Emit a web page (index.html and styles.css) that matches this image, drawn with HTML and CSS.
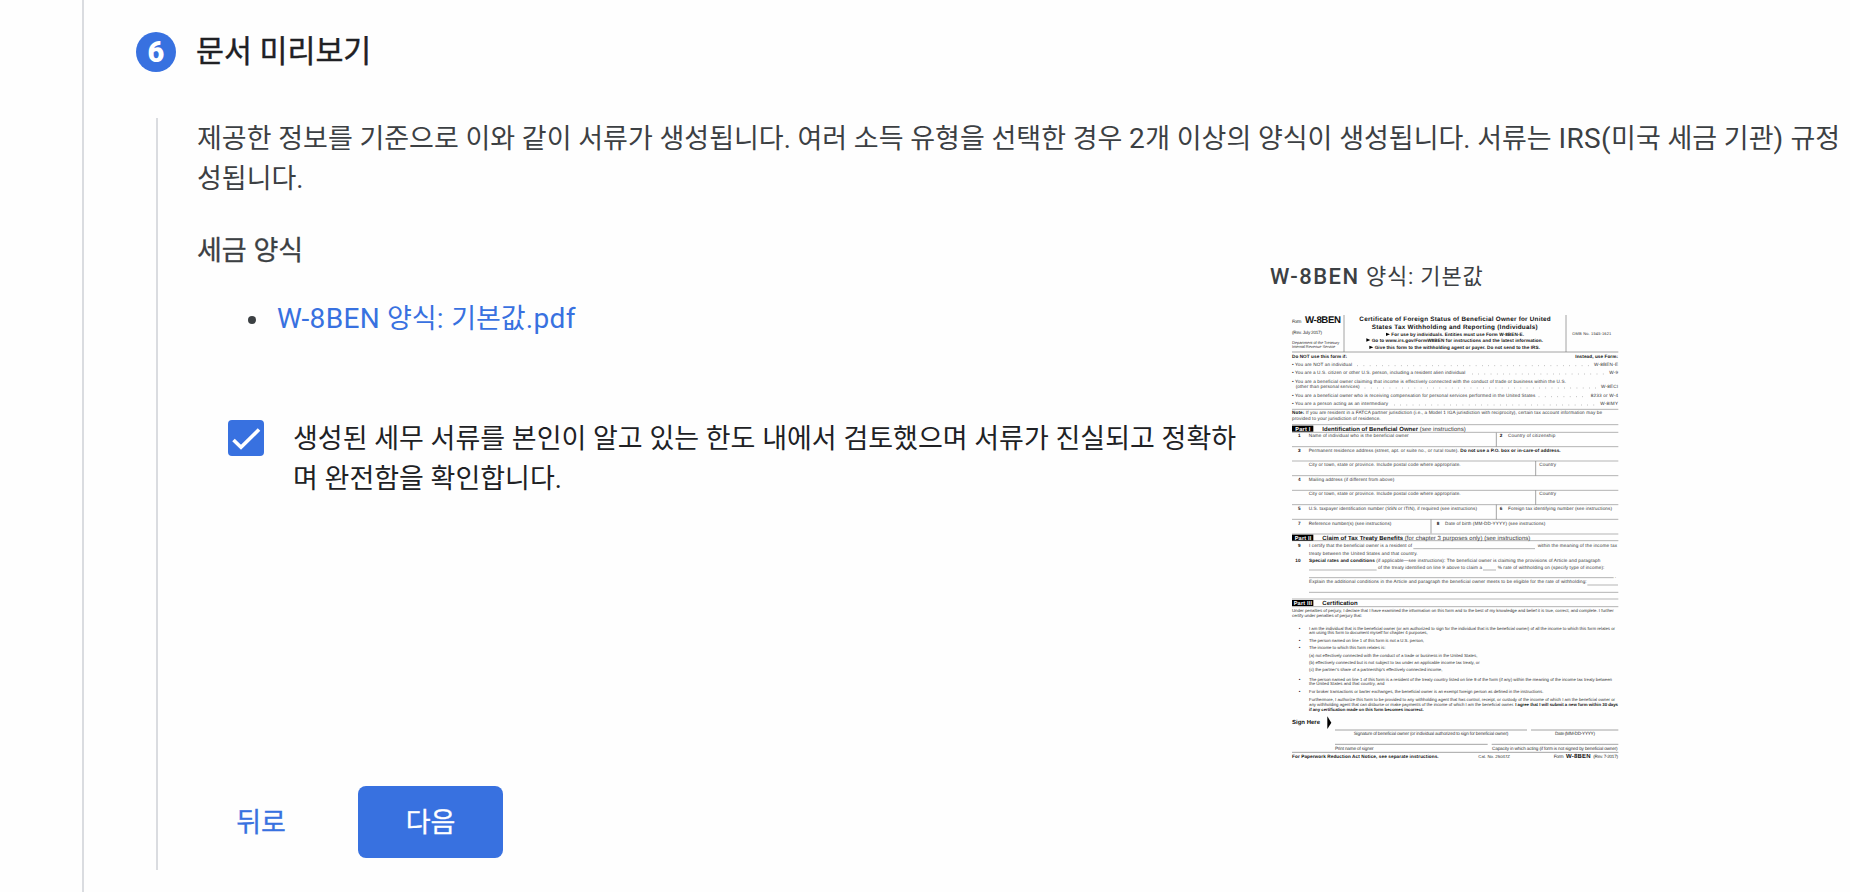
FILE: index.html
```html
<!DOCTYPE html>
<html lang="ko">
<head>
    <meta charset="UTF-8">
    <meta name="viewport" content="width=device-width, initial-scale=1.0">
    <title>문서 미리보기</title>
    <link rel="stylesheet" href="styles.css">
</head>
<body>
<div class="stepper">
    <div class="step-header">
        <span class="step-number">6</span>
        <h1>문서 미리보기</h1>
    </div>
    <div class="step-body">
        <p class="intro">제공한 정보를 기준으로 이와 같이 서류가 생성됩니다. 여러 소득 유형을 선택한 경우 <span class="latin">2</span>개 이상의 양식이 생성됩니다. 서류는 <span class="latin">IRS(</span>미국 세금 기관<span class="latin">)</span> 규정<br>성됩니다.</p>
        <div class="columns">
            <div class="forms">
                <h2>세금 양식</h2>
                <ul>
                    <li><a href="#"><span class="latin">W-8BEN</span> 양식<span class="latin">: </span>기본값<span class="latin">.pdf</span></a></li>
                </ul>
                <label class="confirm">
                    <span class="checkbox">
                        <svg width="36" height="36" viewBox="0 0 36 36"><path d="M5.5 20 L13 27.3 L31 9.5" fill="none" stroke="#fff" stroke-width="3.6"/></svg>
                    </span>
                    <span class="confirm-text">생성된 세무 서류를 본인이 알고 있는 한도 내에서 검토했으며 서류가 진실되고 정확하<br>며 완전함을 확인합니다.</span>
                </label>
            </div>
            <div class="preview">
                <h3><span class="latin-bold">W-8BEN</span> 양식: 기본값</h3>
                <svg class="document" width="350" height="460" viewBox="0 0 1050 1380">
                    <!-- form header -->
                    <text x="36" y="54" textLength="28">Form</text>
                    <text class="b" x="75" y="53" font-size="29" textLength="108">W-8BEN</text>
                    <text x="36" y="88" textLength="90">(Rev. July 2017)</text>
                    <text x="36" y="118" font-size="12" textLength="142">Department of the Treasury</text>
                    <text x="36" y="130" font-size="12" textLength="130">Internal Revenue Service</text>
                    <text class="b" x="238" y="49" font-size="19" textLength="574">Certificate of Foreign Status of Beneficial Owner for United</text>
                    <text class="b" x="275" y="71" font-size="19" textLength="498">States Tax Withholding and Reporting (Individuals)</text>
                    <path class="arrow" d="M318 83l12 5-12 5zM259 100l12 5-12 5zM268 122l12 5-12 5z"/>
                    <text class="b" x="334" y="93" textLength="398">For use by individuals. Entities must use Form W-8BEN-E.</text>
                    <text class="b" x="275" y="111" textLength="514">Go to www.irs.gov/FormW8BEN for instructions and the latest information.</text>
                    <text class="b" x="284" y="133" textLength="496">Give this form to the withholding agent or payer. Do not send to the IRS.</text>
                    <text x="877" y="89" font-size="12" textLength="117">OMB No. 1545-1621</text>
                    <path class="rule" d="M192 30V141M858 30V141"/>
                    <path class="rule" d="M36 141H1015"/>

                    <!-- who should not use the form -->
                    <text class="b" x="36" y="158" textLength="165">Do NOT use this form if:</text>
                    <text class="b" x="886" y="159" textLength="128">Instead, use Form:</text>
                    <text x="36" y="183" textLength="180">• You are NOT an individual</text>
                    <text x="942" y="183" textLength="72">W-8BEN-E</text>
                    <text x="36" y="208" textLength="520">• You are a U.S. citizen or other U.S. person, including a resident alien individual</text>
                    <text x="988" y="208" textLength="26">W-9</text>
                    <text x="36" y="234" textLength="822">• You are a beneficial owner claiming that income is effectively connected with the conduct of trade or business within the U.S.</text>
                    <text x="47" y="250" textLength="192">(other than personal services)</text>
                    <text x="963" y="250" textLength="51">W-8ECI</text>
                    <text x="36" y="276" textLength="730">• You are a beneficial owner who is receiving compensation for personal services performed in the United States</text>
                    <text x="932" y="276" textLength="82">8233 or W-4</text>
                    <text x="36" y="301" textLength="288">• You are a person acting as an intermediary</text>
                    <text x="961" y="301" textLength="53">W-8IMY</text>
                    <path class="dots" d="M232 182H932M576 207H980M254 249H952M776 275H924M342 300H952"/>
                    <path class="light" d="M36 313H1015"/>
                    <text x="36" y="328" textLength="930"><tspan class="b">Note:</tspan> If you are resident in a FATCA partner jurisdiction (i.e., a Model 1 IGA jurisdiction with reciprocity), certain tax account information may be</text>
                    <text x="36" y="344" textLength="266">provided to your jurisdiction of residence.</text>

                    <!-- part I -->
                    <path class="light" d="M36 359H1015M36 382H1015"/>
                    <rect x="36" y="362" width="64" height="18"/>
                    <text class="b white" x="46" y="377" font-size="17" textLength="45">Part I</text>
                    <text x="127" y="377" font-size="18" textLength="430"><tspan class="b">Identification of Beneficial Owner</tspan> (see instructions)</text>
                    <text class="b" x="54" y="396">1</text>
                    <text x="86" y="396" textLength="300">Name of individual who is the beneficial owner</text>
                    <text class="b" x="659" y="396">2</text>
                    <text x="684" y="396" textLength="142">Country of citizenship</text>
                    <text class="b" x="54" y="440">3</text>
                    <text x="86" y="440" textLength="756">Permanent residence address (street, apt. or suite no., or rural route). <tspan class="b">Do not use a P.O. box or in-care-of address.</tspan></text>
                    <text x="86" y="484" textLength="456">City or town, state or province. Include postal code where appropriate.</text>
                    <text x="778" y="484" textLength="50">Country</text>
                    <text class="b" x="54" y="527">4</text>
                    <text x="86" y="527" textLength="257">Mailing address (if different from above)</text>
                    <text x="86" y="571" textLength="456">City or town, state or province. Include postal code where appropriate.</text>
                    <text x="778" y="571" textLength="50">Country</text>
                    <text class="b" x="54" y="615">5</text>
                    <text x="86" y="615" textLength="505">U.S. taxpayer identification number (SSN or ITIN), if required (see instructions)</text>
                    <text class="b" x="659" y="615">6</text>
                    <text x="684" y="615" textLength="312">Foreign tax identifying number (see instructions)</text>
                    <text class="b" x="54" y="661">7</text>
                    <text x="86" y="661" textLength="248">Reference number(s) (see instructions)</text>
                    <text class="b" x="470" y="661">8</text>
                    <text x="495" y="661" textLength="301">Date of birth (MM-DD-YYYY) (see instructions)</text>
                    <path class="light" d="M36 425H1015M36 468H1015M36 512H1015M36 556H1015M36 599H1015M36 643H1015"/>
                    <path class="rule" d="M649 383V425M767 468V512M767 556V599M649 599V643M453 643V686"/>

                    <!-- part II -->
                    <path class="light" d="M36 687H1015M36 707H1015"/>
                    <rect x="36" y="689" width="64" height="18"/>
                    <text class="b white" x="44" y="704" font-size="17" textLength="50">Part II</text>
                    <text x="127" y="704" font-size="18" textLength="624"><tspan class="b">Claim of Tax Treaty Benefits</tspan> (for chapter 3 purposes only) (see instructions)</text>
                    <text class="b" x="54" y="726">9</text>
                    <text x="87" y="726" textLength="309">I certify that the beneficial owner is a resident of</text>
                    <text x="773" y="726" textLength="238">within the meaning of the income tax</text>
                    <text x="87" y="749" textLength="326">treaty between the United States and that country.</text>
                    <text class="b" x="46" y="770">10</text>
                    <text x="87" y="770" textLength="874"><tspan class="b">Special rates and conditions</tspan> (if applicable—see instructions): The beneficial owner is claiming the provisions of Article and paragraph</text>
                    <text x="294" y="792" textLength="312">of the treaty identified on line 9 above to claim a</text>
                    <text x="653" y="792" textLength="320">% rate of withholding on (specify type of income):</text>
                    <text x="1004" y="818">.</text>
                    <text x="87" y="835" textLength="833">Explain the additional conditions in the Article and paragraph the beneficial owner meets to be eligible for the rate of withholding:</text>
                    <path class="light" d="M400 731H765M87 795H290M609 795H648M87 818H1001M922 840H1014M87 862H1015"/>

                    <!-- part III -->
                    <path class="light" d="M36 882H1015M36 905H1015"/>
                    <rect x="36" y="885" width="64" height="18"/>
                    <text class="b white" x="41" y="900" font-size="17" textLength="55">Part III</text>
                    <text class="b" x="127" y="900" font-size="18" textLength="106">Certification</text>
                    <text x="36" y="922" font-size="13" textLength="965">Under penalties of perjury, I declare that I have examined the information on this form and to the best of my knowledge and belief it is true, correct, and complete. I further</text>
                    <text x="36" y="936" font-size="13" textLength="210">certify under penalties of perjury that:</text>
                    <text x="56" y="974">•</text>
                    <text x="87" y="974" font-size="13" textLength="918">I am the individual that is the beneficial owner (or am authorized to sign for the individual that is the beneficial owner) of all the income to which this form relates or</text>
                    <text x="87" y="987" font-size="13" textLength="356">am using this form to document myself for chapter 4 purposes,</text>
                    <text x="56" y="1011">•</text>
                    <text x="87" y="1011" font-size="13" textLength="345">The person named on line 1 of this form is not a U.S. person,</text>
                    <text x="56" y="1032">•</text>
                    <text x="87" y="1032" font-size="13" textLength="229">The income to which this form relates is:</text>
                    <text x="87" y="1055" font-size="13" textLength="505">(a) not effectively connected with the conduct of a trade or business in the United States,</text>
                    <text x="87" y="1077" font-size="13" textLength="512">(b) effectively connected but is not subject to tax under an applicable income tax treaty, or</text>
                    <text x="87" y="1099" font-size="13" textLength="400">(c) the partner’s share of a partnership’s effectively connected income,</text>
                    <text x="56" y="1127">•</text>
                    <text x="87" y="1127" font-size="13" textLength="909">The person named on line 1 of this form is a resident of the treaty country listed on line 9 of the form (if any) within the meaning of the income tax treaty between</text>
                    <text x="87" y="1140" font-size="13" textLength="226">the United States and that country, and</text>
                    <text x="56" y="1164">•</text>
                    <text x="87" y="1164" font-size="13" textLength="703">For broker transactions or barter exchanges, the beneficial owner is an exempt foreign person as defined in the instructions.</text>
                    <text x="87" y="1188" font-size="13" textLength="918">Furthermore, I authorize this form to be provided to any withholding agent that has control, receipt, or custody of the income of which I am the beneficial owner or</text>
                    <text x="87" y="1203" font-size="13" textLength="927">any withholding agent that can disburse or make payments of the income of which I am the beneficial owner. <tspan class="b">I agree that I will submit a new form within 30 days</tspan></text>
                    <text class="b" x="87" y="1218" font-size="13" textLength="344">if any certification made on this form becomes incorrect.</text>

                    <!-- signature -->
                    <text class="b" x="36" y="1257" font-size="18" textLength="84">Sign Here</text>
                    <path class="arrow" d="M142 1234l12 19-12 19z"/>
                    <path class="rule" d="M165 1275H741M753 1275H1015M165 1318H623M635 1318H1015"/>
                    <text x="221" y="1290" textLength="464">Signature of beneficial owner (or individual authorized to sign for beneficial owner)</text>
                    <text x="825" y="1290" textLength="120">Date (MM-DD-YYYY)</text>
                    <text x="165" y="1334" textLength="116">Print name of signer</text>
                    <text x="636" y="1335" textLength="377">Capacity in which acting (if form is not signed by beneficial owner)</text>
                    <path class="rule" d="M36 1342H1015"/>
                    <text class="b" x="36" y="1359" textLength="440">For Paperwork Reduction Act Notice, see separate instructions.</text>
                    <text x="595" y="1359" font-size="13" textLength="95">Cat. No. 25047Z</text>
                    <text x="821" y="1359" textLength="30">Form</text>
                    <text class="b" x="858" y="1360" font-size="18" textLength="74">W-8BEN</text>
                    <text x="940" y="1359" textLength="74">(Rev. 7-2017)</text>
                </svg>
            </div>
        </div>
        <div class="actions">
            <button class="btn-back">뒤로</button>
            <button class="btn-next">다음</button>
        </div>
    </div>
</div>
</body>
</html>
```
FILE: styles.css
```css
* {
    box-sizing: border-box;
}
body {
    margin: 0;
    font-family: Roboto, "Noto Sans CJK KR", sans-serif;
    font-size: 27px;
    line-height: 40px;
    color: #3c4043;
    background-color: #fefefe;
    overflow: hidden;
}
h1, h2, h3, p, ul {
    margin: 0;
    padding: 0;
}
.stepper {
    height: 892px;
    margin-left: 82px;
    padding-top: 32px;
    border-left: 2px solid #dadce0;
}
.step-header {
    display: flex;
    align-items: center;
    gap: 20px;
    height: 40px;
    margin-left: 52px;
}
.step-number {
    width: 40px;
    height: 40px;
    border-radius: 50%;
    background-color: #3871e0;
    color: #fff;
    font-size: 29px;
    font-weight: 900;
    text-align: center;
}
h1 {
    font-size: 30.4px;
    font-weight: 400;
    line-height: 36px;
    color: #202124;
    margin-top: -1px;
    -webkit-text-stroke: 0.4px;
}
.step-body {
    height: 752px;
    margin-top: 46px;
    margin-left: 72px;
    padding-top: 1px;
    padding-left: 39px;
    border-left: 2px solid #dadce0;
}
.intro {
    white-space: nowrap;
}
.latin {
    font-size: 28px;
    line-height: 1;
    letter-spacing: 0.4px;
}
.columns {
    display: grid;
    grid-template-columns: 1073px 1fr;
    height: 587px;
}
.forms h2 {
    margin-top: 32px;
    font-size: 27px;
    font-weight: 400;
    -webkit-text-stroke: 0.3px;
}
.forms ul {
    margin-top: 28px;
    padding-left: 74px;
}
.forms li {
    padding-left: 6px;
}
.forms a {
    color: #3871e0;
    text-decoration: none;
}
.confirm {
    display: flex;
    gap: 29px;
    margin-top: 80px;
    margin-left: 31px;
    color: #202124;
}
.checkbox {
    width: 36px;
    height: 36px;
    margin-top: 1px;
    border-radius: 4px;
    background-color: #3871e0;
}
.checkbox svg {
    display: block;
}
.confirm-text {
    white-space: nowrap;
}
.preview h3 {
    height: 40px;
    margin-top: 58px;
    font-size: 22px;
    font-weight: 400;
    letter-spacing: 0.8px;
}
.latin-bold {
    font-weight: 500;
    letter-spacing: 1.5px;
}
.document {
    display: block;
    margin-top: 8px;
    margin-left: 10px;
    font-family: "Liberation Sans", Arial, sans-serif;
    font-size: 14px;
    fill: #333;
    text-rendering: geometricPrecision;
}
.document .b {
    font-weight: bold;
    fill: #111;
}
.document .white {
    fill: #fff;
}
.document rect,
.document .arrow {
    fill: #000;
}
.document .rule {
    stroke: #777;
    stroke-width: 2;
}
.document .light {
    stroke: #b4b4b4;
    stroke-width: 3;
}
.document .dots {
    stroke: #777;
    stroke-width: 2;
    stroke-dasharray: 2 16.7;
}
.actions {
    display: flex;
    gap: 49px;
    margin-left: 16px;
}
button {
    height: 72px;
    padding: 0 0 3px;
    border: none;
    border-radius: 8px;
    font-family: inherit;
    font-size: 27px;
    font-weight: 400;
    -webkit-text-stroke: 0.3px;
    cursor: pointer;
}
.btn-back {
    width: 96px;
    background: none;
    color: #3871e0;
}
.btn-next {
    width: 145px;
    background-color: #3871e0;
    color: #fff;
}
```
